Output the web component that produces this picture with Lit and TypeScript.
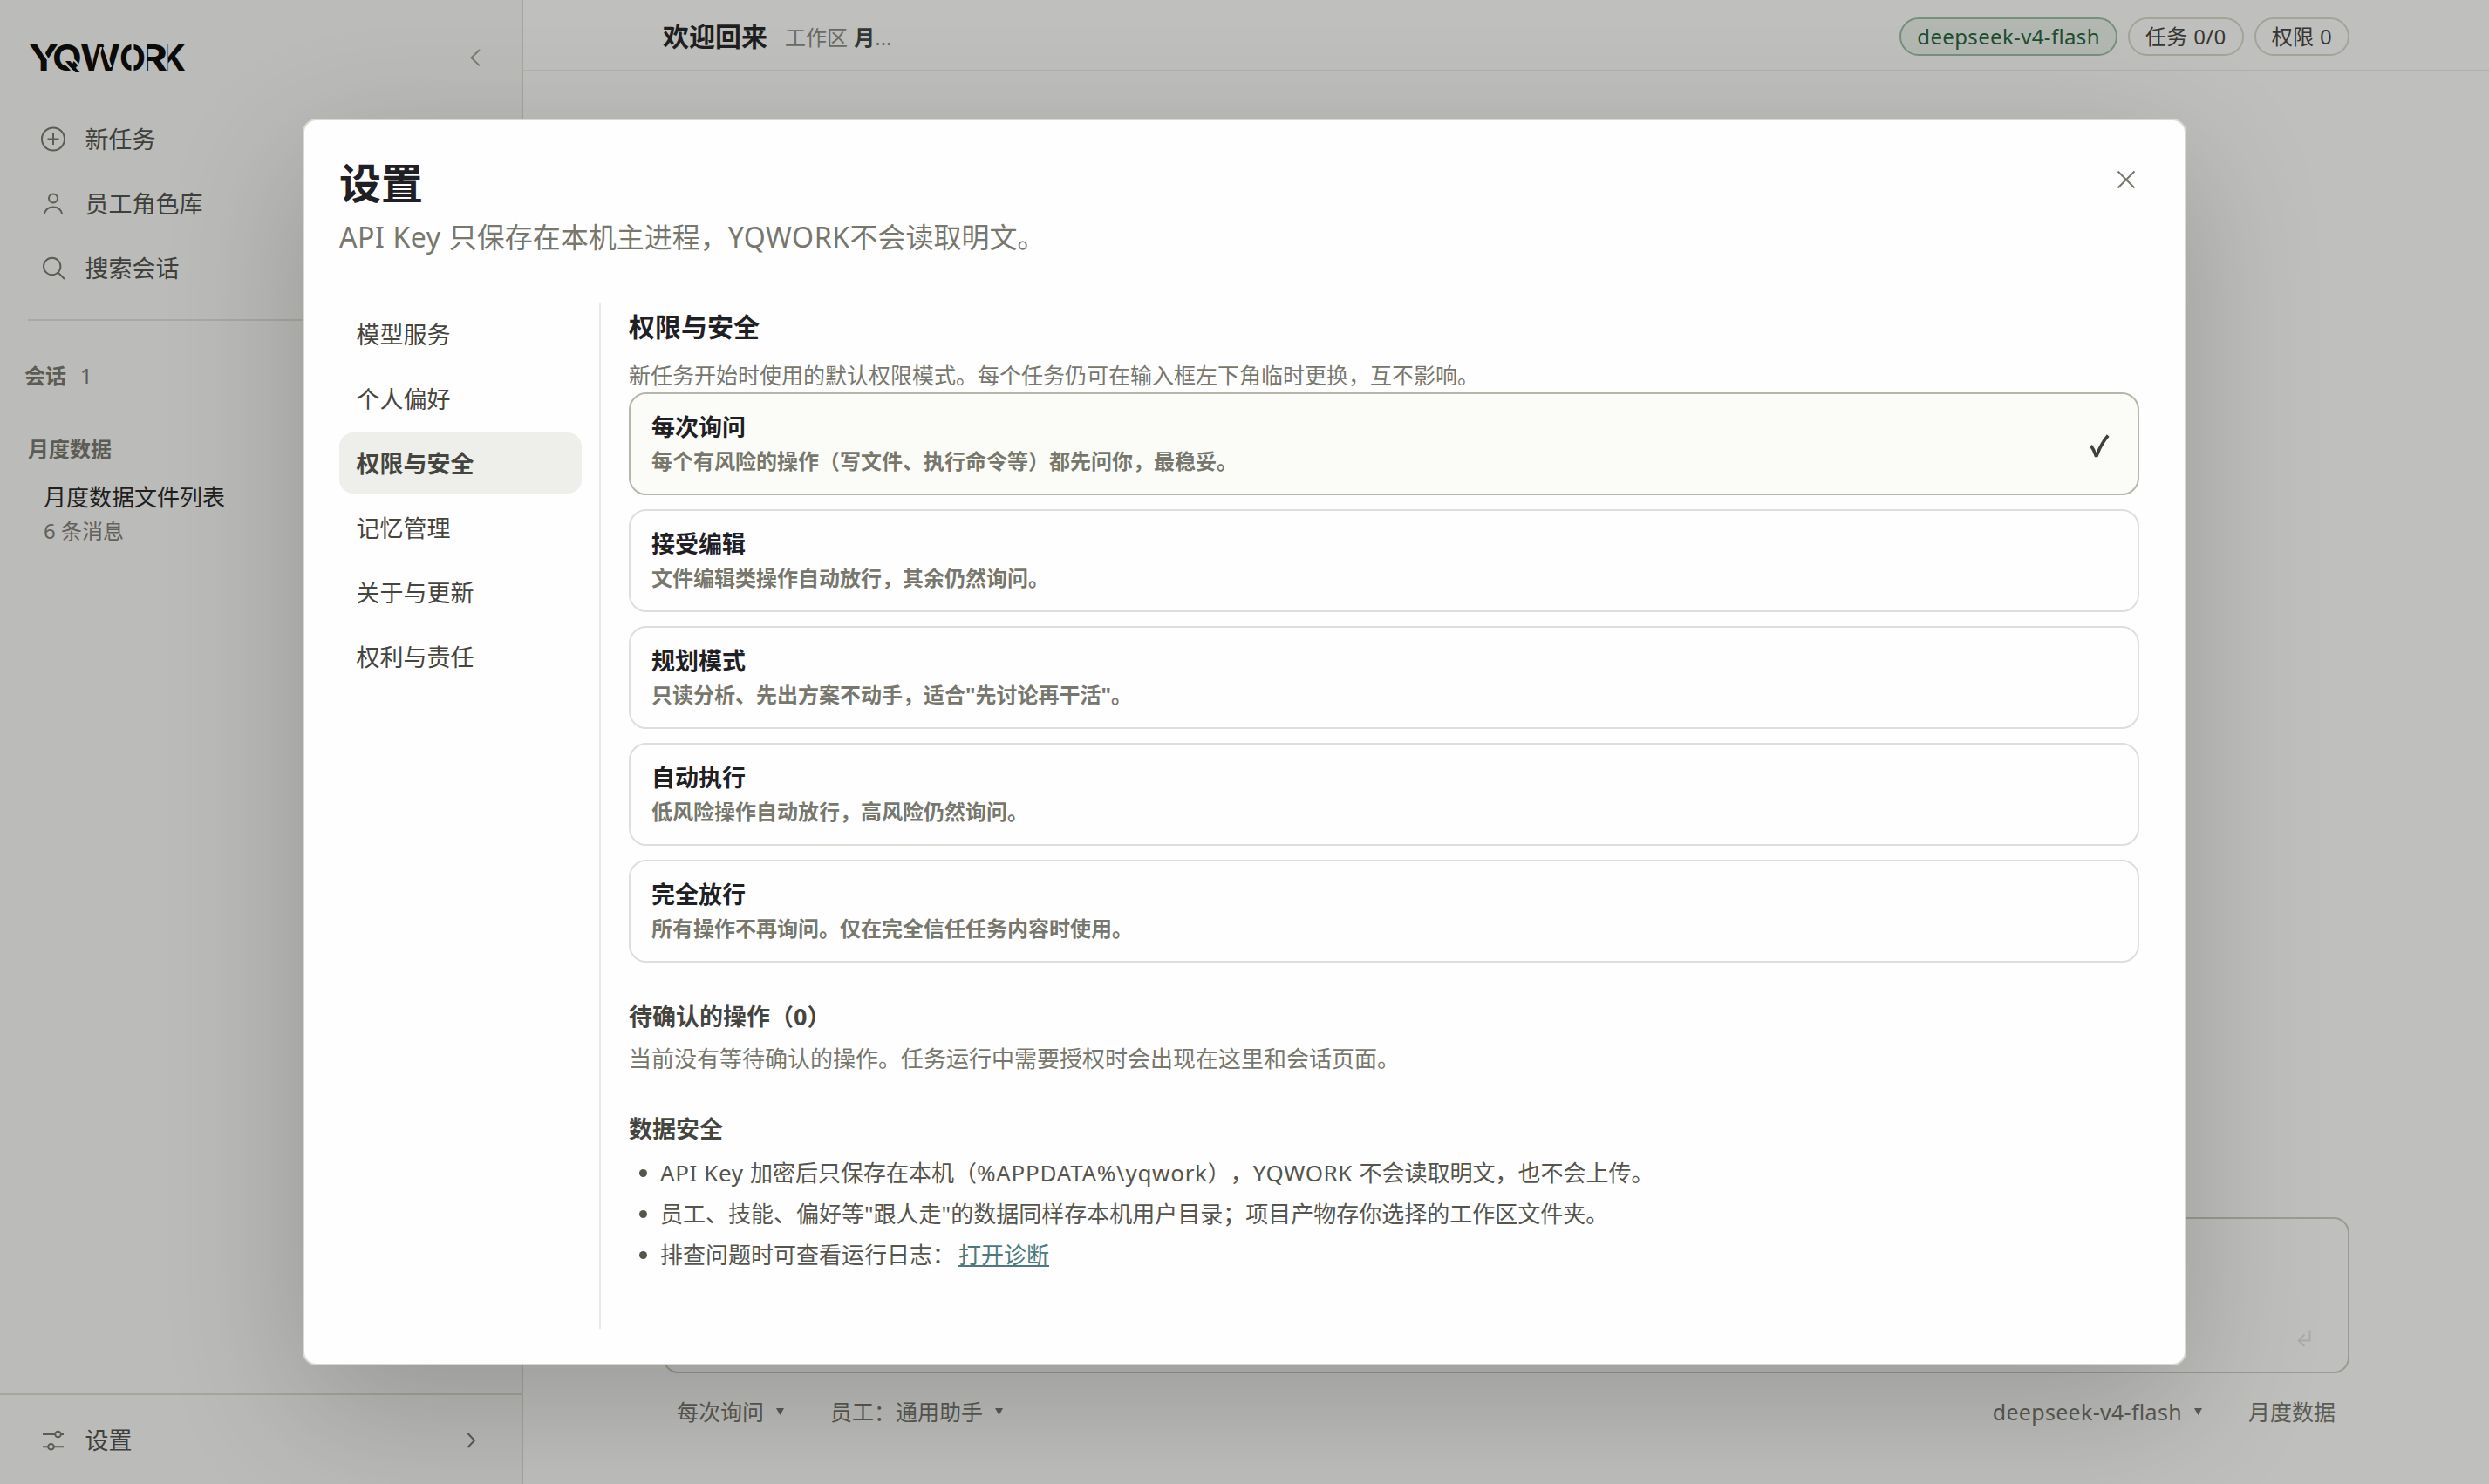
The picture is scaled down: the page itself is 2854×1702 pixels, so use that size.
import { LitElement, html, css, svg } from 'lit'
import { customElement, property, state } from 'lit/decorators.js'
import { classMap } from 'lit/directives/class-map.js'

interface Mode {
  id: string
  title: string
  desc: string
}

const MODES: Mode[] = [
  { id: 'ask', title: '每次询问', desc: '每个有风险的操作（写文件、执行命令等）都先问你，最稳妥。' },
  { id: 'edit', title: '接受编辑', desc: '文件编辑类操作自动放行，其余仍然询问。' },
  { id: 'plan', title: '规划模式', desc: '只读分析、先出方案不动手，适合"先讨论再干活"。' },
  { id: 'auto', title: '自动执行', desc: '低风险操作自动放行，高风险仍然询问。' },
  { id: 'full', title: '完全放行', desc: '所有操作不再询问。仅在完全信任任务内容时使用。' },
]

const TABS = ['模型服务', '个人偏好', '权限与安全', '记忆管理', '关于与更新', '权利与责任']

// All stroke icons share a 32 x 32 box.
const ICONS: Record<string, unknown> = {
  plus: svg`<circle cx="16" cy="15.5" r="13" /><path d="M16 9v13M9.5 15.5h13" />`,
  user: svg`<circle cx="16" cy="9.5" r="5" /><path d="M5.8 27.5c1.2-5 5-8 10.2-8s9 3 10.2 8" />`,
  search: svg`<circle cx="14.7" cy="13.5" r="9.7" /><path d="M21.5 20.5l7.5 7.5" />`,
  sliders: svg`<path d="M4 9h14M25 9h3M4 23.3h6M17 23.3h11" /><circle cx="21.5" cy="9" r="3.3" /><circle cx="13.5" cy="23.3" r="3.3" />`,
  left: svg`<path d="M21 7l-9.5 9.2 9.5 9.2" />`,
  right: svg`<path d="M11.5 8l7.5 8-7.5 8" />`,
  close: svg`<path d="M6.5 6.5l19 19M25.5 6.5l-19 19" />`,
  enter: svg`<path d="M22.5 6.5v12H10M16.5 11.5l-6.8 7 6.8 6.5" />`,
}

@customElement('yq-icon')
export class YqIcon extends LitElement {
  static styles = css`
    :host {
      display: block;
      flex: none;
      width: 32px;
      height: 32px;
    }
    svg {
      display: block;
      fill: none;
      stroke: currentColor;
      stroke-width: 2;
    }
  `

  @property() name = ''

  render() {
    return html`<svg width="32" height="32" viewBox="0 0 32 32">${ICONS[this.name]}</svg>`
  }
}

@customElement('yq-logo')
export class YqLogo extends LitElement {
  static styles = css`
    :host {
      display: block;
      width: 190px;
      height: 34px;
    }
    svg {
      display: block;
      margin: -14px 0 0 -4px;
    }
    text {
      font: 700 41.3px Inter, sans-serif;
      fill: #0b0c09;
    }
    .cut {
      fill: none;
      stroke: #bbbbb9;
    }
  `

  // Letters are set right to left so that each stencil cut only touches its own letter.
  render() {
    return html`
      <svg width="190" height="62" viewBox="-4 -14 190 62">
        <text x="151" y="31" textLength="29" lengthAdjust="spacingAndGlyphs">K</text>
        <path class="cut" stroke-width="11" d="M154 0v33" />
        <text x="126" y="31" textLength="33" lengthAdjust="spacingAndGlyphs">R</text>
        <path class="cut" stroke-width="8" d="M131 0v33" />
        <text x="104" y="31" textLength="30" lengthAdjust="spacingAndGlyphs">O</text>
        <path class="cut" stroke-width="3" d="M119 0v33" />
        <text x="59" y="31" textLength="46" lengthAdjust="spacingAndGlyphs">W</text>
        <path class="cut" stroke-width="2.5" d="M76 31l7-27M86 4l8 23" />
        <text x="27" y="31" textLength="34" lengthAdjust="spacingAndGlyphs">Q</text>
        <path class="cut" stroke-width="2" d="M41 22l12 12M50 17l12 12" />
        <text x="0" y="31" textLength="34" lengthAdjust="spacingAndGlyphs">Y</text>
        <path class="cut" stroke-width="2.5" d="M11 1l12 19" />
      </svg>
    `
  }
}

@customElement('app-root')
export class AppRoot extends LitElement {
  static styles = css`
    :host {
      display: flex;
      position: relative;
      width: 2854px;
      height: 1702px;
      overflow: hidden;
      background: #bfbfbd;
      color: #3f3f3b;
      font-family: 'Noto Sans', 'Noto Sans CJK SC', sans-serif;
      font-size: 27px;
      line-height: 40px;
      text-spacing-trim: space-all;
      white-space: nowrap;
    }
    * {
      box-sizing: border-box;
    }
    h1, h2, h3, p, ul {
      margin: 0;
      padding: 0;
    }

    /* sidebar */
    .sidebar {
      display: flex;
      flex-direction: column;
      flex: none;
      width: 600px;
      background: #bbbbb9;
      border-right: 2px solid #a6a69d;
    }
    .brand {
      display: flex;
      justify-content: space-between;
      padding: 50px 37px 0 33px;
      height: 125px;
      color: #7b7b73;
    }
    .menu {
      display: flex;
      flex-direction: column;
      gap: 4px;
    }
    .row {
      display: flex;
      align-items: center;
      gap: 20.5px;
      height: 70px;
      padding-left: 45px;
    }
    .row yq-icon, .footer yq-icon {
      color: #5c5c55;
    }
    .rule {
      height: 2px;
      margin: 23px 30px 0 32px;
      background: #a9a99f;
    }
    .sessions {
      display: flex;
      gap: 16px;
      margin-top: 43px;
      padding-left: 28px;
      font-size: 24px;
      color: #5c5c55;
    }
    .group {
      margin: 44px 0 15px 32px;
      font-size: 24px;
      font-weight: 700;
      color: #5c5c55;
    }
    .session {
      padding-left: 50px;
      font-size: 26px;
      color: #1f1f1e;
    }
    .session small {
      display: block;
      margin-top: -1px;
      font-size: 24px;
      color: #62625b;
    }
    .footer {
      display: flex;
      align-items: center;
      gap: 20.5px;
      height: 104px;
      margin-top: auto;
      padding: 1px 41px 0 45px;
      border-top: 2px solid #a6a69d;
    }
    .footer span {
      flex: 1;
    }

    /* main */
    .main {
      display: flex;
      flex-direction: column;
      flex: 1;
    }
    .topbar {
      display: flex;
      align-items: center;
      height: 82px;
      padding: 3px 160px 0;
      border-bottom: 2px solid #b1b1a7;
    }
    .topbar h1 {
      font-size: 30px;
      color: #1f1f22;
    }
    .workspace {
      margin-left: 20px;
      padding-top: 3px;
      font-size: 24px;
      word-spacing: 1px;
      color: #6b6b65;
    }
    .workspace b {
      color: #363634;
    }
    .pills {
      display: flex;
      gap: 12px;
      margin-left: auto;
    }
    .pill {
      height: 44px;
      padding: 0 18px;
      border: 2px solid #a3a39a;
      border-radius: 22px;
      font-size: 24px;
      letter-spacing: 0.35px;
      color: #363634;
    }
    .pill.model {
      background: #b2b8b1;
      border-color: #76907c;
      color: #1f4d33;
    }
    .composer {
      display: flex;
      align-items: flex-end;
      justify-content: flex-end;
      height: 179px;
      margin: auto 160px 0;
      padding: 0 34px 22px;
      border: 2px solid #9b9b92;
      border-radius: 18px;
      color: #aaaaa8;
    }
    .toolbar {
      display: flex;
      align-items: center;
      height: 127px;
      padding: 0 176px 39px;
      font-size: 25px;
      color: #5b5b54;
    }
    .pick {
      display: flex;
      align-items: center;
      gap: 14px;
      margin-right: 53px;
    }
    .pick::after {
      content: '';
      width: 9px;
      height: 8px;
      background: currentColor;
      clip-path: polygon(0 0, 100% 0, 50% 100%);
    }
    .pick.end {
      margin-left: auto;
      letter-spacing: 0.3px;
    }

    /* settings dialog */
    .backdrop {
      position: absolute;
      inset: 0;
      display: flex;
      align-items: center;
      justify-content: center;
    }
    .dialog {
      display: flex;
      flex-direction: column;
      width: 2160px;
      height: 1430px;
      padding: 0 40px 40px;
      background: #fefefe;
      border: 2px solid #dbd8cd;
      border-radius: 16px;
      box-shadow: 0 48px 160px rgba(0, 0, 0, 0.2);
    }
    .head {
      display: flex;
      justify-content: space-between;
      height: 210px;
      padding: 36px 11px 0 0;
    }
    .head h2 {
      font-size: 48px;
      line-height: 72px;
      color: #1f2024;
    }
    .head p {
      margin-top: 2px;
      font-size: 32px;
      line-height: 48px;
      color: #77776d;
    }
    .head yq-icon {
      margin-top: 16px;
      color: #77776d;
    }
    .latin {
      letter-spacing: 0.6px;
    }
    .latin.path {
      letter-spacing: 0.7px;
    }
    .body {
      display: flex;
      flex: 1;
    }
    .tabs {
      display: flex;
      flex-direction: column;
      gap: 4px;
      width: 300px;
      padding-right: 20px;
      border-right: 2px solid #e9e8e3;
    }
    .tab {
      height: 70px;
      padding-left: 19.5px;
      border-radius: 16px;
      line-height: 71px;
      color: #45453f;
    }
    .tab.active {
      background: #eeeeea;
      font-weight: 700;
    }
    .panel {
      flex: 1;
      padding: 0 12px 0 32px;
    }
    .panel h3 {
      margin-bottom: 8px;
      font-size: 30px;
      line-height: 54px;
      color: #1f2024;
    }
    .hint {
      font-size: 25px;
      color: #77776d;
    }
    .modes {
      display: flex;
      flex-direction: column;
      gap: 16px;
    }
    .mode {
      display: flex;
      align-items: center;
      justify-content: space-between;
      height: 118px;
      padding: 0 24px;
      border: 2px solid #e0ded8;
      border-radius: 20px;
      font-weight: 700;
      color: #1f2024;
    }
    .mode.selected {
      background: #fbfcf7;
      border-color: #b8b5ab;
    }
    .mode p {
      font-size: 24px;
      line-height: 38px;
      color: #77776d;
    }
    .check {
      fill: none;
      stroke: #3f3f3b;
      stroke-width: 3.6;
    }
    .panel h4 {
      margin: 40px 0 4px;
      font-size: 27px;
      line-height: 44px;
      color: #45453f;
    }
    .panel h4.data {
      margin: 37px 0 5px;
    }
    .pending {
      font-size: 26px;
      line-height: 44px;
      color: #77776d;
    }
    .notes {
      list-style: none;
      font-size: 26px;
      line-height: 47px;
      color: #55554e;
    }
    .notes li {
      display: flex;
      align-items: center;
    }
    .notes li::before {
      content: '';
      width: 9px;
      height: 9px;
      margin: 0 15px 0 12px;
      border-radius: 50%;
      background: currentColor;
    }
    .notes a {
      margin-left: 4px;
      color: #4c7a7c;
      text-decoration: underline;
    }
  `

  @state() mode = 'ask'
  @state() tab = '权限与安全'

  #renderMode(m: Mode) {
    const selected = m.id === this.mode
    return html`
      <div class=${classMap({ mode: true, selected })} @click=${() => (this.mode = m.id)}>
        <div>
          <div>${m.title}</div>
          <p>${m.desc}</p>
        </div>
        ${selected
          ? html`<svg class="check" width="38" height="38" viewBox="0 0 38 38">
              <path d="M8.5 21.2q3.5 4.5 5.7 11.3h1q4.5-13 13-23" />
            </svg>`
          : null}
      </div>
    `
  }

  render() {
    return html`
      <div class="sidebar">
        <div class="brand">
          <yq-logo></yq-logo>
          <yq-icon name="left"></yq-icon>
        </div>
        <div class="menu">
          <div class="row"><yq-icon name="plus"></yq-icon>新任务</div>
          <div class="row"><yq-icon name="user"></yq-icon>员工角色库</div>
          <div class="row"><yq-icon name="search"></yq-icon>搜索会话</div>
        </div>
        <div class="rule"></div>
        <div class="sessions"><b>会话</b><span>1</span></div>
        <div class="group">月度数据</div>
        <div class="session">月度数据文件列表<small>6 条消息</small></div>
        <div class="footer">
          <yq-icon name="sliders"></yq-icon>
          <span>设置</span>
          <yq-icon name="right"></yq-icon>
        </div>
      </div>

      <div class="main">
        <div class="topbar">
          <h1>欢迎回来</h1>
          <div class="workspace">工作区 <b>月</b>...</div>
          <div class="pills">
            <div class="pill model">deepseek-v4-flash</div>
            <div class="pill">任务 0/0</div>
            <div class="pill">权限 0</div>
          </div>
        </div>
        <div class="composer"><yq-icon name="enter"></yq-icon></div>
        <div class="toolbar">
          <div class="pick">每次询问</div>
          <div class="pick">员工：通用助手</div>
          <div class="pick end">deepseek-v4-flash</div>
          <div>月度数据</div>
        </div>
      </div>

      <div class="backdrop">
        <div class="dialog">
          <div class="head">
            <div>
              <h2>设置</h2>
              <p><span class="latin">API Key </span>只保存在本机主进程，<span class="latin">YQWORK</span>不会读取明文。</p>
            </div>
            <yq-icon name="close"></yq-icon>
          </div>
          <div class="body">
            <div class="tabs">
              ${TABS.map(
                (t) => html`<div
                  class=${classMap({ tab: true, active: t === this.tab })}
                  @click=${() => (this.tab = t)}
                >${t}</div>`
              )}
            </div>
            <div class="panel">
              <h3>权限与安全</h3>
              <p class="hint">新任务开始时使用的默认权限模式。每个任务仍可在输入框左下角临时更换，互不影响。</p>
              <div class="modes">${MODES.map((m) => this.#renderMode(m))}</div>
              <h4>待确认的操作（0）</h4>
              <p class="pending">当前没有等待确认的操作。任务运行中需要授权时会出现在这里和会话页面。</p>
              <h4 class="data">数据安全</h4>
              <ul class="notes">
                <li>
                  <div><span class="latin">API Key </span>加密后只保存在本机（<span class="latin path">%APPDATA%\\yqwork</span>），<span class="latin">YQWORK </span>不会读取明文，也不会上传。</div>
                </li>
                <li>员工、技能、偏好等"跟人走"的数据同样存本机用户目录；项目产物存你选择的工作区文件夹。</li>
                <li>排查问题时可查看运行日志：<a>打开诊断</a></li>
              </ul>
            </div>
          </div>
        </div>
      </div>
    `
  }
}

declare global {
  interface HTMLElementTagNameMap {
    'app-root': AppRoot
    'yq-icon': YqIcon
    'yq-logo': YqLogo
  }
}
